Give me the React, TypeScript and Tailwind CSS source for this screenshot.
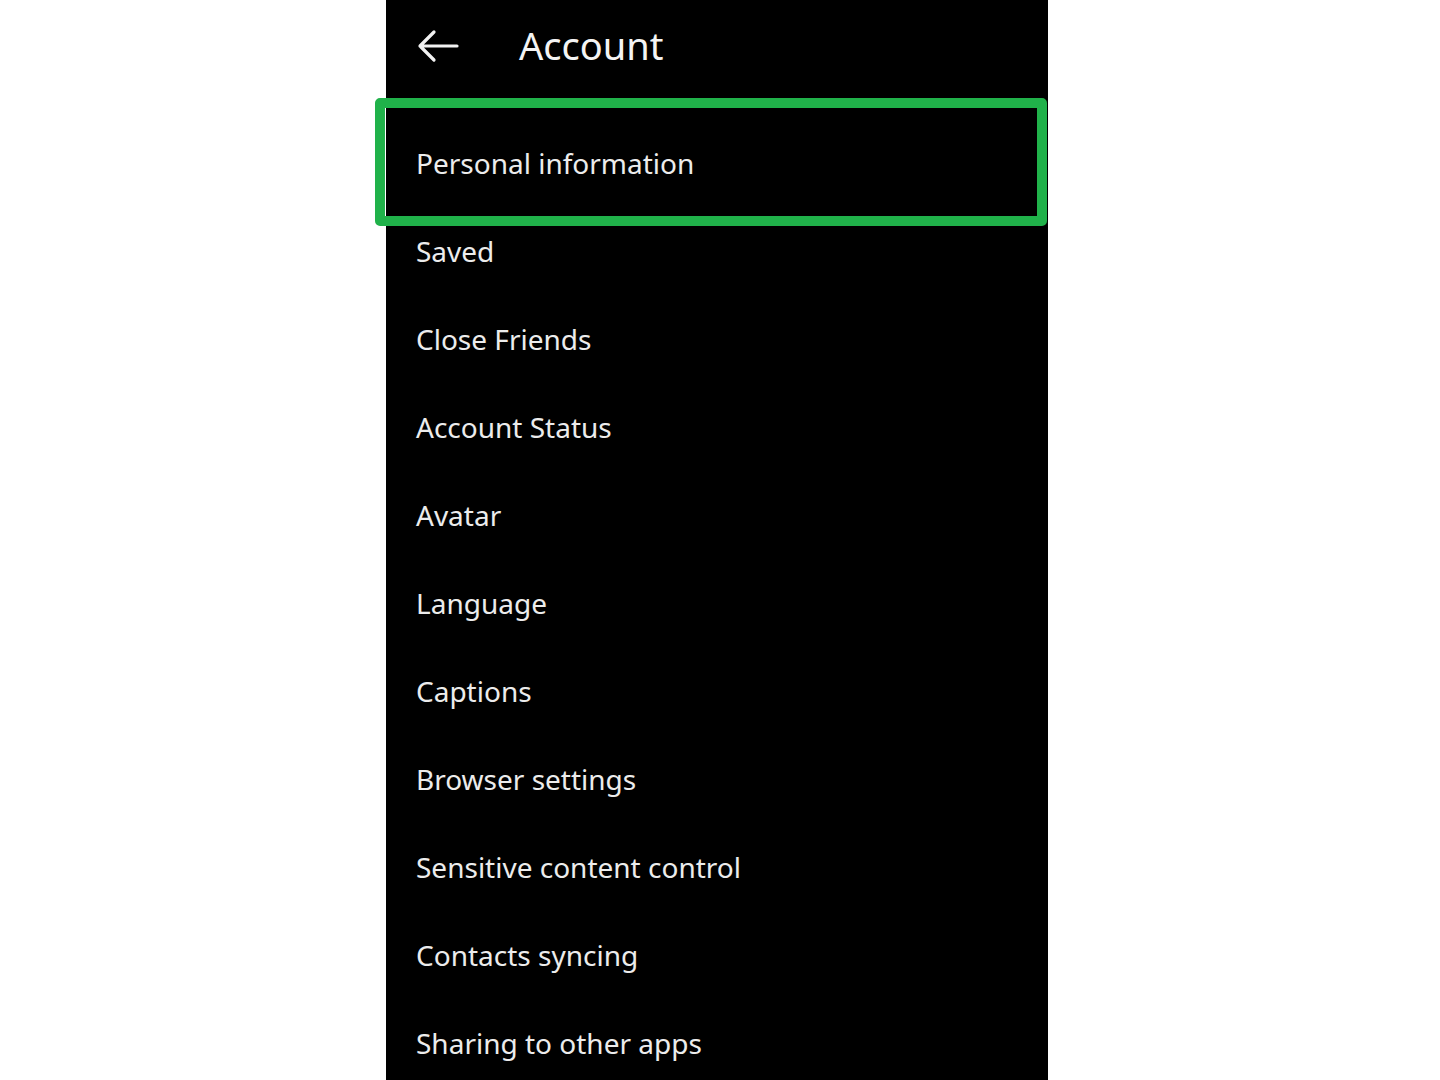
const items = [
  "Personal information",
  "Saved",
  "Close Friends",
  "Account Status",
  "Avatar",
  "Language",
  "Captions",
  "Browser settings",
  "Sensitive content control",
  "Contacts syncing",
  "Sharing to other apps",
];

function BackArrow() {
  return (
    <svg width="44" height="34" viewBox="0 0 44 34" fill="none">
      <path
        d="M41 17H4M18 3L4 17l14 14"
        stroke="#f2f2f2"
        strokeWidth="3.2"
        strokeLinecap="round"
        strokeLinejoin="round"
      />
    </svg>
  );
}

export default function App() {
  return (
    <div
      className="h-[1080px] w-full overflow-hidden bg-white"
      style={{ fontFamily: '"Noto Sans", "Open Sans", sans-serif' }}
    >
      <div className="relative ml-[386px] h-full w-[662px] bg-black text-[#ececec]">
        <div className="flex h-[92px] items-center">
          <div className="ml-[30px] flex">
            <BackArrow />
          </div>
          <h1 className="mb-[2px] ml-[59px] text-[38px] leading-none text-[#f4f4f4]">Account</h1>
        </div>

        <ul className="mt-[28px]">
          {items.map((label) => (
            <li key={label} className="flex h-[88px] items-center pb-[2px] pl-[30px] text-[28px] leading-none">
              {label}
            </li>
          ))}
        </ul>

        {/* highlight annotation */}
        <div className="absolute left-[-11px] top-[98px] h-[128px] w-[672px] rounded-[5px] border-[10px] border-[#20b24a]" />
      </div>
    </div>
  );
}
